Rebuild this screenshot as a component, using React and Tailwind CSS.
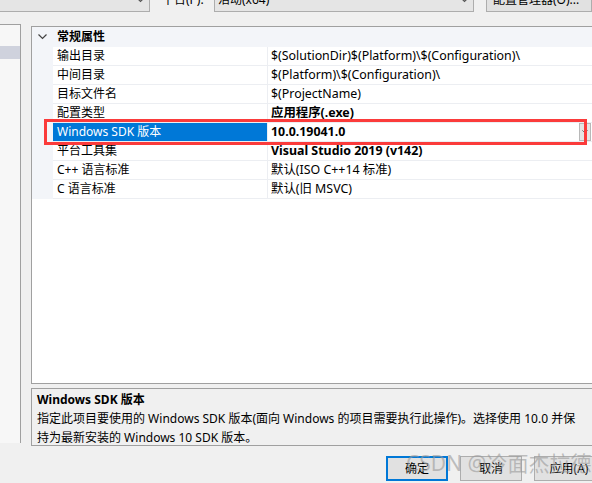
import React from 'react';

const rows = [
  { name: '输出目录', value: '$(SolutionDir)$(Platform)\\$(Configuration)\\' },
  { name: '中间目录', value: '$(Platform)\\$(Configuration)\\' },
  { name: '目标文件名', value: '$(ProjectName)' },
  { name: '配置类型', value: '应用程序(.exe)', bold: true },
  { name: 'Windows SDK 版本', value: '10.0.19041.0', bold: true, selected: true },
  { name: '平台工具集', value: 'Visual Studio 2019 (v142)', bold: true },
  { name: 'C++ 语言标准', value: '默认(ISO C++14 标准)' },
  { name: 'C 语言标准', value: '默认(旧 MSVC)' },
];

function Chevron({ className }) {
  return (
    <svg width="9" height="6" viewBox="0 0 9 6" className={className}>
      <polyline points="0.5,0.5 4.5,4.5 8.5,0.5" fill="none" stroke="currentColor" strokeWidth="1.2" />
    </svg>
  );
}

function PropRow({ row }) {
  return (
    <div className="flex h-[19px] shrink-0">
      <div className="w-[21px] shrink-0 bg-[#f3f5f9]" />
      <div
        className={
          'w-[215px] shrink-0 flex items-center pl-[4px] border-r border-b border-[#eceef2] ' +
          (row.selected ? 'bg-[#0078d7] text-white' : 'text-black')
        }
      >
        {row.name}
      </div>
      <div className="flex-1 min-w-0 flex items-center pl-[3px] border-b border-[#eceef2]">
        <span className={'text-[12.4px] ' + (row.bold ? 'font-bold' : '')}>{row.value}</span>
        {row.selected && (
          <div className="ml-auto mr-[1px] w-[12px] h-[18px] bg-[#e5e5e5] border border-[#b8b8b8] flex items-center justify-center text-[#555]">
            <Chevron className="w-[6px] h-[4px]" />
          </div>
        )}
      </div>
    </div>
  );
}

export default function App() {
  return (
    <div className="relative w-[592px] h-[483px] overflow-hidden bg-[#f0f0f0] text-[12px] leading-none text-black font-['Segoe_UI','Noto_Sans','Noto_Sans_CJK_SC',sans-serif]">
      {/* toolbar, scrolled partly out of view */}
      <div className="flex items-stretch h-[24px] -mt-[12px]">
        <div className="w-[150px] shrink-0 bg-[#e5e5e5] border-r border-b border-[#adadad] flex items-center justify-end pr-[4px] text-[#555]">
          <Chevron />
        </div>
        <div className="w-[64px] shrink-0 pl-[12px] flex items-center whitespace-nowrap">平台(P):</div>
        <div className="w-[260px] shrink-0 bg-[#e5e5e5] border border-t-0 border-[#adadad] flex items-center pl-[3px] text-[#555]">
          <span className="text-black">活动(x64)</span>
          <Chevron className="ml-auto mr-[4px]" />
        </div>
        <div className="ml-[12px] flex-1 bg-[#e1e1e1] border border-t-0 border-[#adadad] flex items-center pl-[6px] whitespace-nowrap">
          配置管理器(O)...
        </div>
      </div>

      <div className="flex mt-[12px]">
        {/* tree pane on the left */}
        <div className="w-[21px] shrink-0 h-[419px] bg-[#f7f7f7] border-t border-r border-[#a0a0a0] pt-[21px]">
          <div className="h-[13px] bg-[#cfd2dd]" />
        </div>

        <div className="ml-[10px] flex-1 min-w-0 pt-[2px]">
          {/* property grid */}
          <div className="h-[358px] bg-white border-t border-l border-b border-[#a0a0a0] flex flex-col">
            <div className="h-[20px] shrink-0 bg-[#f3f5f9] flex items-center">
              <div className="w-[21px] shrink-0 flex justify-center text-[#444]">
                <Chevron />
              </div>
              <span className="pl-[4px] font-bold">常规属性</span>
            </div>
            {rows.map((row) => (
              <PropRow key={row.name} row={row} />
            ))}
          </div>

          {/* description pane */}
          <div className="mt-[4px] h-[58px] border border-r-0 border-[#a0a0a0] pl-[5px] pt-[1px] leading-[19px] whitespace-nowrap">
            <div className="font-bold">Windows SDK 版本</div>
            <div>指定此项目要使用的 Windows SDK 版本(面向 Windows 的项目需要执行此操作)。选择使用 10.0 并保</div>
            <div>持为最新安装的 Windows 10 SDK 版本。</div>
          </div>

          {/* dialog buttons */}
          <div className="mt-[10px] flex gap-[12px] pl-[355px]">
            <button className="w-[62px] h-[25px] bg-[#e1e1e1] border-2 border-[#0078d7] shrink-0">确定</button>
            <button className="w-[62px] h-[25px] bg-[#e1e1e1] border border-[#adadad] shrink-0">取消</button>
            <button className="w-[70px] h-[25px] bg-[#e1e1e1] border border-[#adadad] shrink-0">应用(A)</button>
          </div>
        </div>
      </div>

      {/* highlight frame around the SDK row */}
      <div className="absolute left-[44px] top-[119px] w-[543px] h-[26px] border-[3px] border-[#fb3b3b]" />

      {/* watermark */}
      <div className="absolute left-[406px] top-[453px] text-[21px] leading-none text-[#9a9a9a]/60 whitespace-nowrap font-['Noto_Sans','Noto_Sans_CJK_SC',sans-serif]">
        CSDN @冷面杰拉德
      </div>
    </div>
  );
}
